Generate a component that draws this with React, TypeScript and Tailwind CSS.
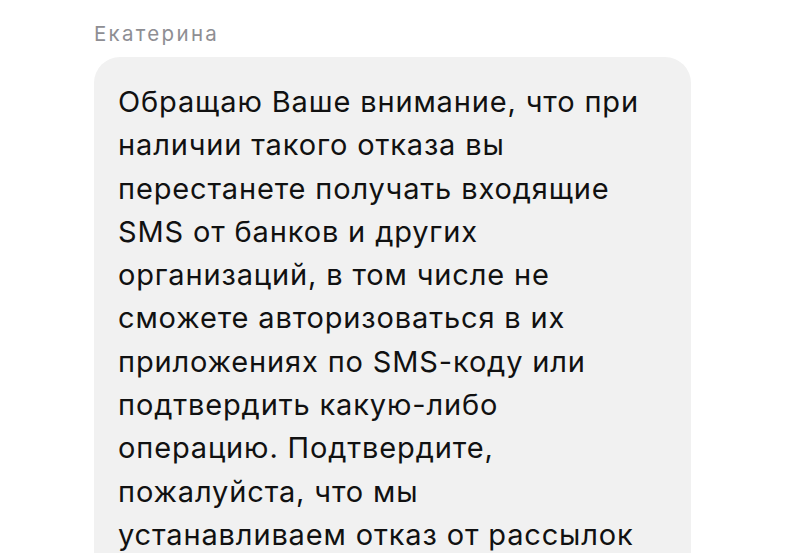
const lines = [
  "Обращаю Ваше внимание, что при",
  "наличии такого отказа вы",
  "перестанете получать входящие",
  "SMS от банков и других",
  "организаций, в том числе не",
  "сможете авторизоваться в их",
  "приложениях по SMS-коду или",
  "подтвердить какую-либо",
  "операцию. Подтвердите,",
  "пожалуйста, что мы",
  "устанавливаем отказ от рассылок",
];

export default function App() {
  return (
    <div className="h-[553px] w-[800px] overflow-hidden bg-white font-['Inter',sans-serif]">
      <div className="pl-[94px] pt-[20px]">
        <div className="text-[20.5px] leading-[28px] tracking-[2.3px] text-[#8e8e93]">Екатерина</div>
        <div className="mt-[9px] w-[597px] rounded-[26px] bg-[#f1f1f1] pl-[24px] pr-[20px] pt-[23px] pb-[30px] text-[29px] leading-[43.3px] tracking-[0.85px] text-[#111]">
          {lines.map((l) => (
            <div key={l} className="whitespace-nowrap">{l}</div>
          ))}
        </div>
      </div>
    </div>
  );
}
